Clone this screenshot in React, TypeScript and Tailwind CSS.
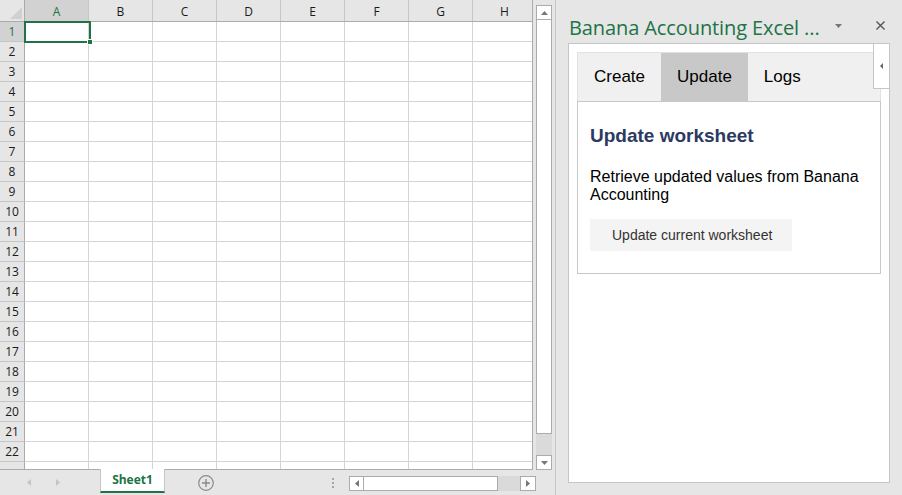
import clsx from 'clsx'

const COLS = ['A', 'B', 'C', 'D', 'E', 'F', 'G', 'H']
const ROWS = Array.from({ length: 23 }, (_, i) => i + 1)

function Arrow({ dir }: { dir: 'up' | 'down' | 'left' | 'right' }) {
  const d = {
    up: 'M0 4L3.5 0L7 4Z',
    down: 'M0 0H7L3.5 4Z',
    left: 'M4 0V7L0 3.5Z',
    right: 'M0 0L4 3.5L0 7Z',
  }[dir]
  const vertical = dir === 'up' || dir === 'down'
  return (
    <svg width={vertical ? 7 : 4} height={vertical ? 4 : 7} viewBox={vertical ? '0 0 7 4' : '0 0 4 7'}>
      <path d={d} fill="#777" />
    </svg>
  )
}

function Grid() {
  return (
    <div className="w-[533px] h-[470px] overflow-hidden bg-white border-r border-b border-[#ababab] flex flex-col font-['Open_Sans',sans-serif] text-[12px] text-[#1a1a1a]">
      <div className="flex h-[22px] shrink-0 bg-[#e6e6e6] border-b border-[#ababab]">
        <div className="w-[25px] shrink-0 border-r border-[#ababab] relative">
          <svg className="absolute left-[10px] top-[7px]" width="12" height="12" viewBox="0 0 12 12">
            <path d="M12 0V12H0Z" fill="#d0d0d0" />
          </svg>
        </div>
        {COLS.map((c) => (
          <div
            key={c}
            className={clsx(
              'w-[64px] shrink-0 border-r border-[#c6c6c6] flex items-center justify-center pt-[3px]',
              c === 'A' && 'bg-[#d2d2d2] text-[#217346]'
            )}
          >
            {c}
          </div>
        ))}
      </div>
      {ROWS.map((r) => (
        <div key={r} className="flex h-[20px] shrink-0">
          <div
            className={clsx(
              'w-[25px] shrink-0 border-r border-r-[#ababab] border-b border-b-[#c6c6c6] flex items-center justify-center pt-px',
              r === 1 ? 'bg-[#d2d2d2] text-[#217346]' : 'bg-[#e6e6e6]'
            )}
          >
            {r < 23 ? r : ''}
          </div>
          {COLS.map((c) => (
            <div key={c} className={clsx('w-[64px] shrink-0 border-r border-b border-[#d4d4d4]', r === 1 && c === 'A' && 'relative z-10')}>
              {r === 1 && c === 'A' && (
                <>
                  <div className="absolute -left-px -top-px w-[67px] h-[22px] border-2 border-[#217346]" />
                  <div className="absolute left-[62px] top-[17px] w-[6px] h-[6px] bg-[#217346] border border-white" />
                </>
              )}
            </div>
          ))}
        </div>
      ))}
    </div>
  )
}

function VScroll() {
  return (
    <div className="ml-[3px] w-[16px] pt-[5px] flex flex-col">
      <div className="h-[15px] bg-white border border-[#ababab] flex items-center justify-center">
        <Arrow dir="up" />
      </div>
      <div className="h-[414px] bg-white border-x border-b border-[#ababab]" />
      <div className="h-[21px] bg-[#dadada]" />
      <div className="h-[15px] bg-white border border-[#ababab] flex items-center justify-center">
        <Arrow dir="down" />
      </div>
    </div>
  )
}

function SheetBar() {
  return (
    <div className="flex items-start h-[25px] font-['Open_Sans',sans-serif]">
      <div className="w-[100px] h-[25px] flex items-center">
        <svg className="ml-[27px]" width="4" height="7" viewBox="0 0 4 7">
          <path d="M4 0V7L0 3.5Z" fill="#c4c4c4" />
        </svg>
        <svg className="ml-[25px]" width="4" height="7" viewBox="0 0 4 7">
          <path d="M0 0L4 3.5L0 7Z" fill="#c4c4c4" />
        </svg>
      </div>
      <div className="-mt-px w-[65px] h-[24px] bg-white border-x border-[#c6c6c6] border-b-2 border-b-[#217346] flex items-center justify-center text-[12px] font-bold text-[#217346]">
        Sheet1
      </div>
      <div className="ml-[33px] h-[25px] flex items-center">
        <svg width="16" height="16" viewBox="0 0 16 16">
          <circle cx="8" cy="8" r="7.3" fill="none" stroke="#8a8a8a" strokeWidth="1.2" />
          <path d="M8 4V12M4 8H12" stroke="#8a8a8a" strokeWidth="1.4" />
        </svg>
      </div>
      <div className="ml-[118px] mt-[8px] flex flex-col gap-[2px]">
        <div className="w-[2px] h-[2px] bg-[#a6a6a6]" />
        <div className="w-[2px] h-[2px] bg-[#a6a6a6]" />
        <div className="w-[2px] h-[2px] bg-[#a6a6a6]" />
      </div>
      <div className="ml-[15px] mt-[6px] w-[187px] h-[15px] flex">
        <div className="w-[15px] bg-white border border-[#ababab] flex items-center justify-center">
          <Arrow dir="left" />
        </div>
        <div className="w-[134px] bg-white border-y border-r border-[#ababab]" />
        <div className="flex-1 bg-[#dadada]" />
        <div className="w-[16px] bg-white border border-[#ababab] flex items-center justify-center">
          <Arrow dir="right" />
        </div>
      </div>
    </div>
  )
}

function TaskPane() {
  return (
    <div className="flex-1 flex flex-col">
      <div className="h-[43px] shrink-0 flex items-start">
        <div className="pl-[13px] pt-[16px] text-[20px] leading-[24px] tracking-[-0.1px] text-[#217346] font-['Open_Sans',sans-serif] whitespace-nowrap">
          Banana Accounting Excel ...
        </div>
        <div className="ml-auto pr-[17px] pt-[21px] flex items-center gap-[34px]">
          <svg width="7" height="4" viewBox="0 0 7 4">
            <path d="M0 0H7L3.5 4Z" fill="#777" />
          </svg>
          <svg width="9" height="9" viewBox="0 0 9 9">
            <path d="M0.5 0.5L8.5 8.5M8.5 0.5L0.5 8.5" stroke="#555" strokeWidth="1.4" />
          </svg>
        </div>
      </div>
      <div className="ml-[12px] w-[322px] h-[440px] bg-white border border-[#c6c6c6] relative p-[8px] font-['Liberation_Sans',Arial,sans-serif]">
        <div className="flex flex-col w-[304px]">
          <div className="h-[49px] flex bg-[#f0f0f0] border-t border-x border-[#e1e1e1] text-[17px] text-black">
            <div className="px-4 flex items-center">Create</div>
            <div className="px-4 flex items-center bg-[#c8c8c8]">Update</div>
            <div className="px-4 flex items-center">Logs</div>
          </div>
          <div className="border border-[#c8c8c8] px-[12px] pt-[23px] pb-[22px]">
            <h2 className="text-[19px] leading-[22px] font-bold text-[#2b3a62]">Update worksheet</h2>
            <p className="mt-[21px] text-[16px] leading-[18px] text-black">
              Retrieve updated values from Banana Accounting
            </p>
            <button className="mt-[15px] w-[202px] h-[32px] bg-[#f4f4f4] text-[14px] text-[#333] text-left pl-[22px]">
              Update current worksheet
            </button>
          </div>
        </div>
        <div className="absolute right-0 top-0 w-[16px] h-[45px] bg-white border-l border-b border-[#c6c6c6] flex items-center justify-center">
          <svg width="3" height="6" viewBox="0 0 3 6">
            <path d="M3 0V6L0 3Z" fill="#666" />
          </svg>
        </div>
      </div>
    </div>
  )
}

export default function App() {
  return (
    <div className="w-[902px] h-[495px] flex bg-[#e6e6e6] overflow-hidden">
      <div className="w-[555px] shrink-0 flex flex-col">
        <div className="flex h-[470px]">
          <Grid />
          <VScroll />
        </div>
        <SheetBar />
      </div>
      <div className="w-px bg-[#c6c6c6]" />
      <TaskPane />
    </div>
  )
}
